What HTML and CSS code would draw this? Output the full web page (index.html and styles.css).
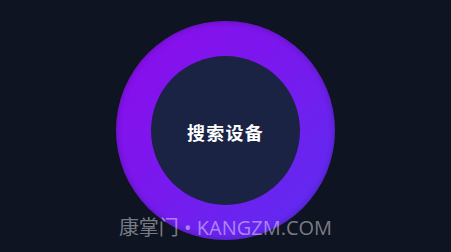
FILE: index.html
```html
<!DOCTYPE html>
<html lang="zh">
<head>
    <meta charset="UTF-8">
    <meta name="viewport" content="width=device-width, initial-scale=1.0">
    <title>搜索设备</title>
    <link rel="stylesheet" href="styles.css">
</head>
<body>
    <div class="stage">
        <div class="ring">
            <div class="core">
                <span class="label">搜索设备</span>
            </div>
        </div>
    </div>
    <div class="watermark">康掌门 • KANGZM.COM</div>
</body>
</html>
```

FILE: styles.css
```css
html, body {
    margin: 0;
    height: 100%;
}

body {
    background: #0e1421;
    overflow: hidden;
    position: relative;
    font-family: "Noto Sans", "Noto Sans CJK SC", sans-serif;
}

.stage {
    display: flex;
    justify-content: center;
    padding-top: 21px;
}

.ring {
    width: 219px;
    height: 219px;
    border-radius: 50%;
    background: linear-gradient(135deg, #8e0cec 0%, #7a18ee 45%, #5a2ff0 100%);
    box-shadow: inset 0 0 6px rgba(14, 20, 33, 0.35);
    display: flex;
    align-items: center;
    justify-content: center;
}

.core {
    width: 149px;
    height: 149px;
    border-radius: 50%;
    background: #1a2344;
    display: flex;
    align-items: center;
    justify-content: center;
}

.label {
    color: #fff;
    font-family: "Noto Sans CJK SC", sans-serif;
    font-size: 18px;
    font-weight: 700;
    letter-spacing: 1.3px;
    margin-top: 2px;
}

.watermark {
    position: absolute;
    left: 0;
    right: 0;
    top: 214px;
    text-align: center;
    color: rgba(255, 255, 255, 0.45);
    font-family: "Open Sans", "Noto Sans CJK SC", sans-serif;
    font-size: 20px;
    line-height: 28px;
}
```
